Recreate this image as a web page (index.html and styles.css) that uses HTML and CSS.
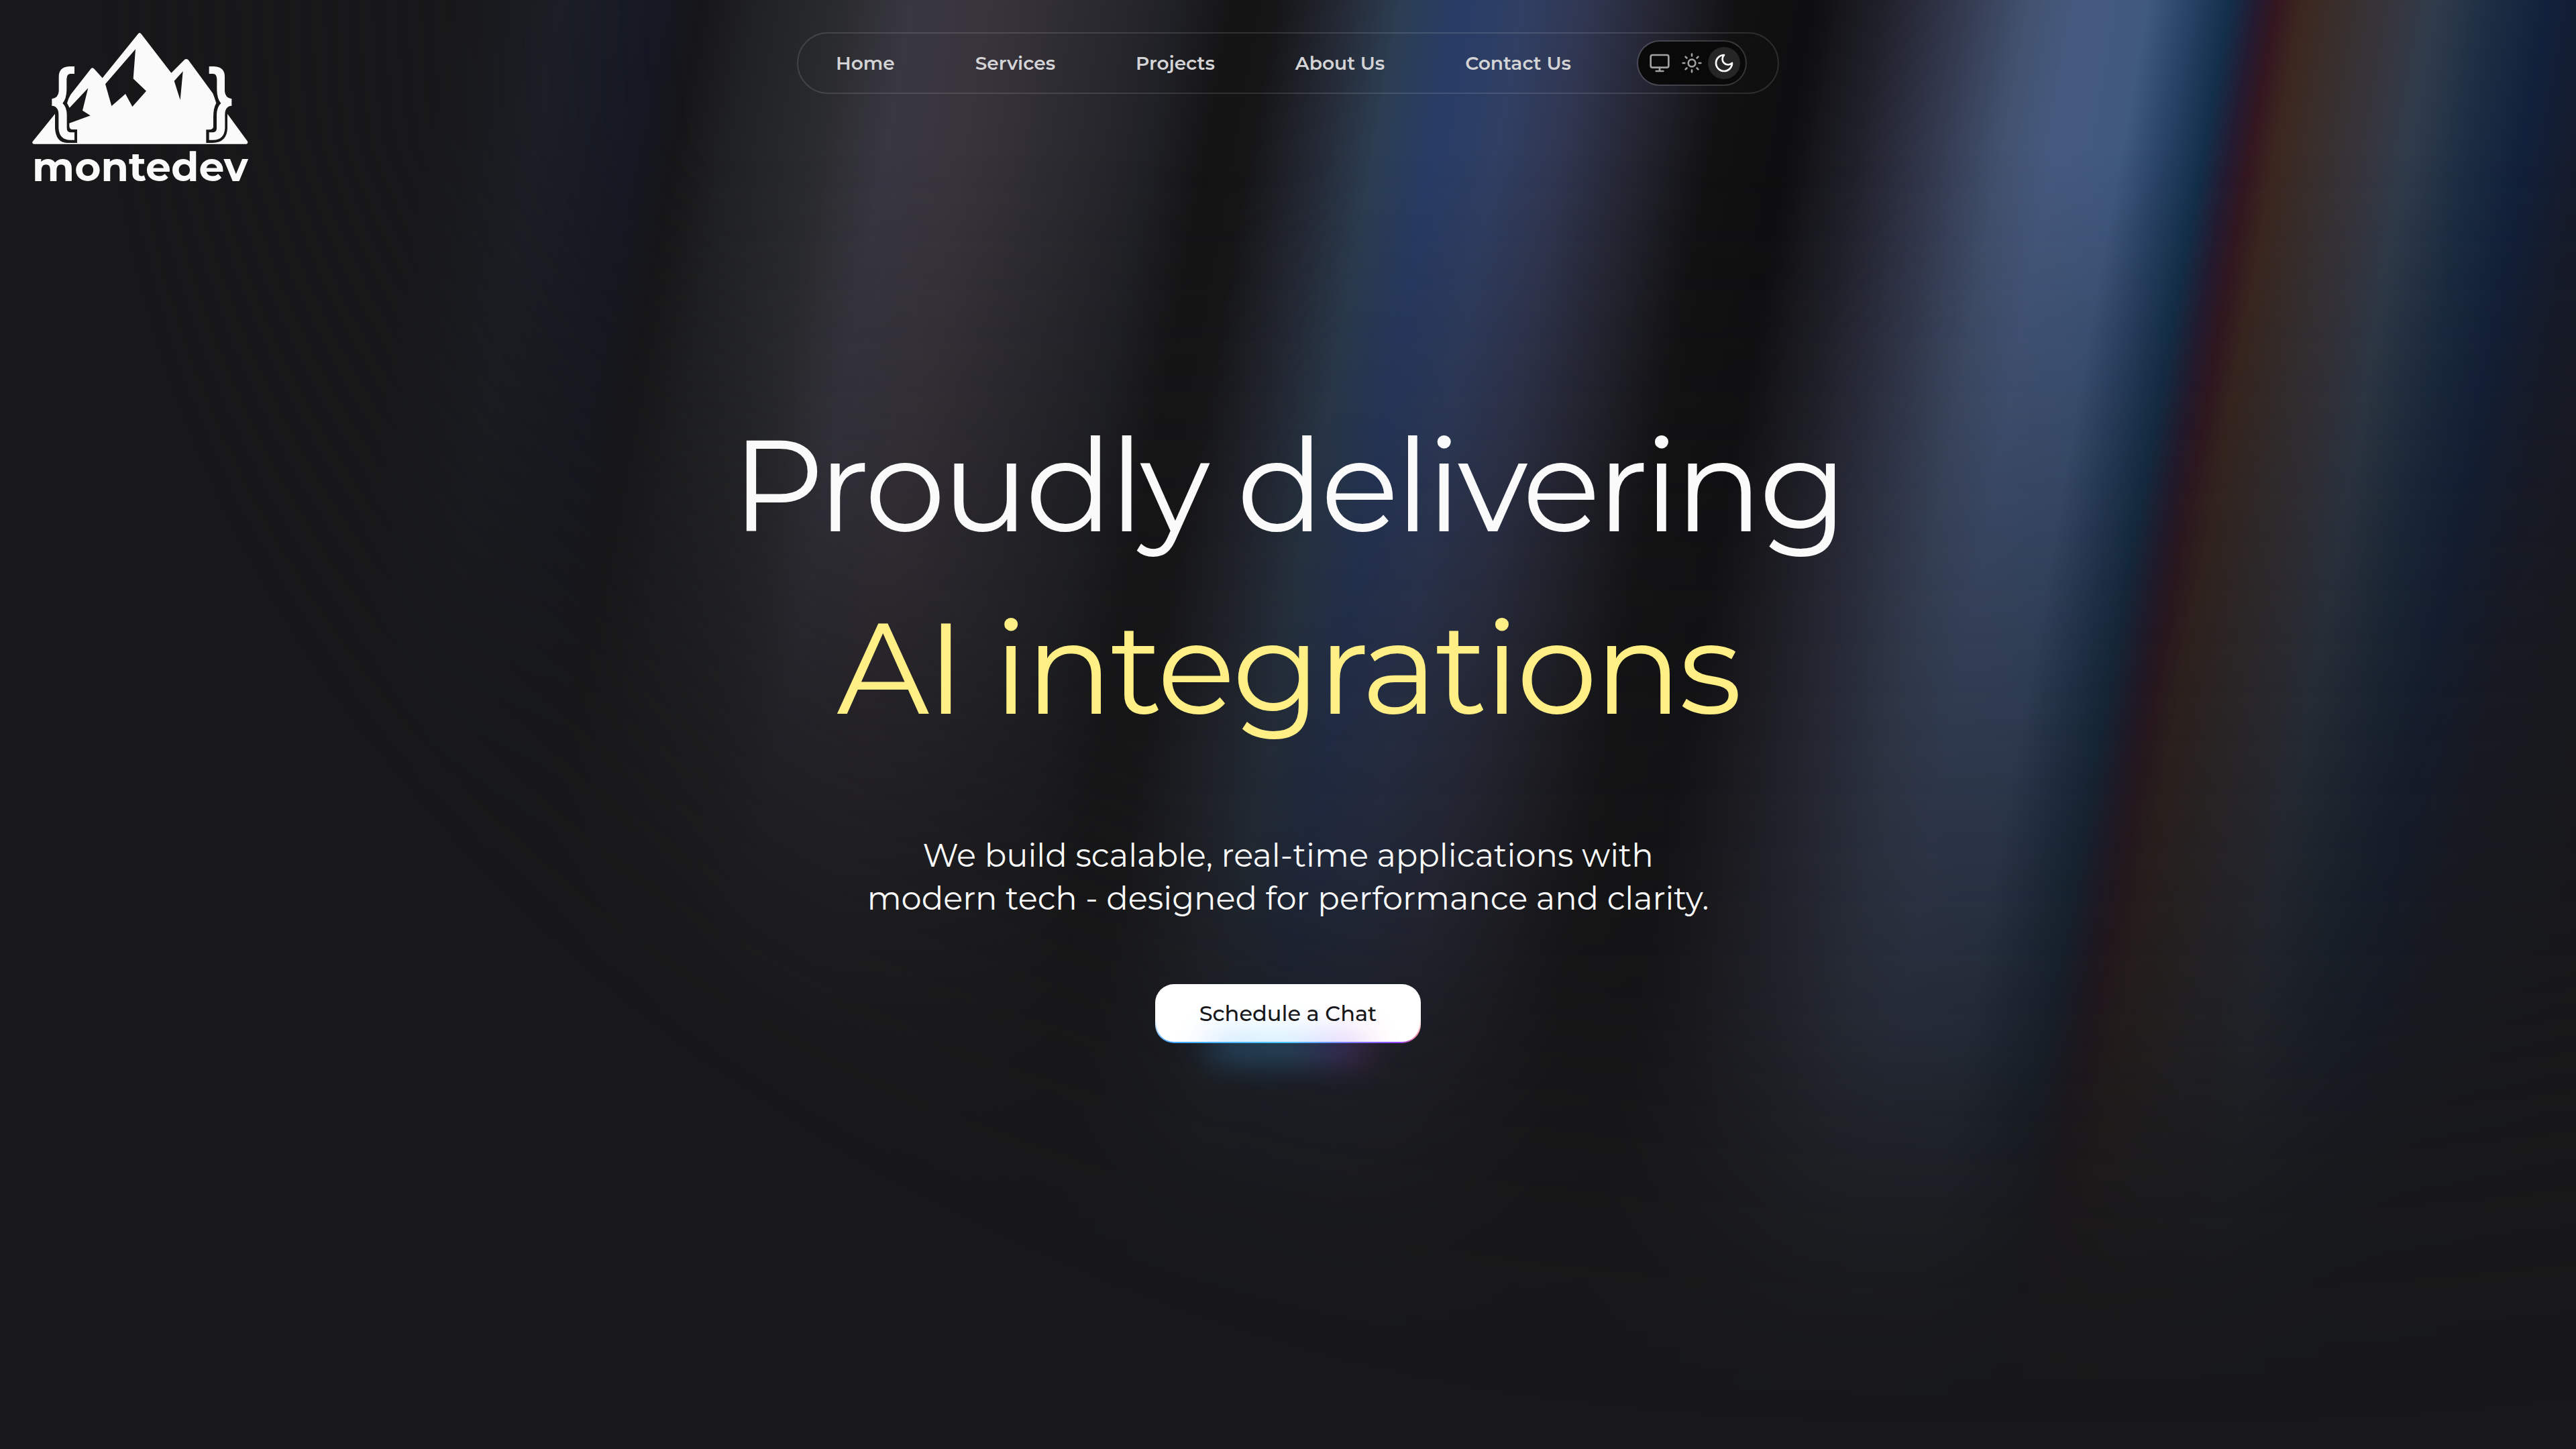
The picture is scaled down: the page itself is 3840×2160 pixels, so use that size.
FILE: index.html
```
<!DOCTYPE html>
<html lang="en">
<head>
  <meta charset="utf-8">
  <meta name="viewport" content="width=device-width, initial-scale=1">
  <title>montedev</title>
  <link rel="stylesheet" href="styles.css">
</head>
<body>
  <div class="backdrop" aria-hidden="true"><div class="rays"></div></div>

  <header class="header">
    <a class="logo" href="#" aria-label="montedev home">
      <svg class="logo-mark" viewBox="54 51 966 501" fill="currentColor" aria-hidden="true">
        <path fill-rule="evenodd" d="M62 551Q51 549 56 540L156 416V480Q160 545 210 546H255V486H235Q220 486 220 470V458L314 424L279 401L304 301L221 389L210 368Q214 350 226 330L317 214Q323 207 330 214L368 256L527 59Q534 49 542 59L676 233L735 174Q743 168 752 175L862 325Q870 345 877 368Q864 390 864 430V475Q862 487 845 487H832V546H860Q925 545 927 480V416L1016 538Q1022 548 1012 551ZM516 127L381 283L409 381L471 327L502 384L564 314L506 259ZM728 226L689 269L716 354Z"/>
        <path id="brace" d="M243 204H220Q173 206 173 250V315Q171 345 142 349V380Q172 382 172 420V480Q175 533 225 533H243V499H225Q209 497 209 480V420Q208 385 190 369Q207 350 208 310V260Q209 238 225 237H243Z"/>
        <use href="#brace" transform="translate(1088 0) scale(-1 1)"/>
      </svg>
      <span class="logo-text">montedev</span>
    </a>

    <nav class="nav" aria-label="Main">
      <div class="nav-links">
        <a href="#">Home</a>
        <a href="#">Services</a>
        <a href="#">Projects</a>
        <a href="#">About Us</a>
        <a href="#">Contact Us</a>
      </div>
      <div class="theme" role="group" aria-label="Theme">
        <button class="theme-option" type="button" aria-label="System theme">
          <svg viewBox="0 0 24 24"><rect x="2" y="3" width="20" height="14" rx="2"/><path d="M8 21h8M12 17v4"/></svg>
        </button>
        <button class="theme-option" type="button" aria-label="Light theme">
          <svg viewBox="0 0 24 24"><circle cx="12" cy="12" r="4"/><path d="M12 2v2M12 20v2M4.93 4.93l1.41 1.41M17.66 17.66l1.41 1.41M2 12h2M20 12h2M6.34 17.66l-1.41 1.41M19.07 4.93l-1.41 1.41"/></svg>
        </button>
        <button class="theme-option active" type="button" aria-label="Dark theme" aria-pressed="true">
          <svg viewBox="0 0 24 24"><path d="M12 3a6 6 0 0 0 9 9 9 9 0 1 1-9-9Z"/></svg>
        </button>
      </div>
    </nav>
  </header>

  <main class="hero">
    <h1 class="title">Proudly delivering <span class="accent">AI integrations</span></h1>
    <p class="lead">We build scalable, real-time applications with<br>modern tech - designed for performance and clarity.</p>
    <button class="cta" type="button"><span>Schedule a Chat</span></button>
  </main>
</body>
</html>
```
FILE: styles.css
```
* {
  box-sizing: border-box;
}

body {
  margin: 0;
  min-height: 100vh;
  background: #18181a;
  color: #fafafa;
  font-family: Montserrat, "Open Sans", sans-serif;
  font-weight: 500;
}

/* Slanted light rays that fade towards the lower left */
.backdrop {
  position: absolute;
  inset: 0;
  z-index: -1;
  overflow: hidden;
  mask-image:
    linear-gradient(#000 10%, rgba(0, 0, 0, .47) 54%, rgba(0, 0, 0, .2) 78%, transparent 100%),
    radial-gradient(ellipse 76% 102% at 80% 0, #000 70%, transparent 100%);
  mask-composite: intersect;
}

.rays {
  width: 125%;
  height: 100%;
  transform: skewX(-10deg);
  transform-origin: 0 14%;
  background: linear-gradient(90deg,
    #18181a 12.8%, #1c2029 16.3%, #151824 19.4%, #161618 20.7%, #202123 22.4%,
    #2a2b2d 25%, #383742 27.2%, #39343c 29.6%, #2b2a30 32.8%, #202126 35.3%,
    #141415 37.2%, #151516 38.5%, #242935 40.6%, #2c3e52 42.4%, #283c66 44.2%,
    #303f63 46.2%, #303650 48.3%, #232430 50.6%, #111112 52.9%, #0e0e10 55.2%,
    #20202a 57.4%, #31364a 59.5%, #42526f 61.9%, #465a80 63.5%, #40597f 65.6%,
    #2a4468 66.8%, #12304c 68.1%, #241a30 69%, #331720 69.6%, #3c271f 70.4%,
    #38302f 71.9%, #36353d 73.2%, #303c4b 74.5%, #1a2c42 76.5%, #11203a 78.1%,
    #161b2a 80%, #18181a 84.2%);
}

.header {
  display: grid;
  grid-template-columns: 1fr auto 1fr;
  align-items: start;
  padding: 48px 48px 0;
}

.logo {
  display: flex;
  flex-direction: column;
  justify-self: start;
  color: inherit;
  text-decoration: none;
}

.logo-mark {
  display: block;
  width: 322px;
}

.logo-text {
  font-size: 60px;
  font-weight: 700;
  line-height: 68px;
}

.nav {
  display: flex;
  align-items: center;
  gap: 98px;
  padding: 10px 46px 10px 56px;
  border: 2px solid rgba(255, 255, 255, .12);
  border-radius: 46px;
}

.nav-links {
  display: flex;
  gap: 120px;
}

.nav-links a {
  color: #d4d4d6;
  font-size: 28px;
  font-weight: 600;
  line-height: 40px;
  text-decoration: none;
}

.theme {
  display: flex;
  padding: 8px;
  border: 2px solid rgba(255, 255, 255, .16);
  border-radius: 34px;
  background: #09090a;
  background-clip: padding-box;
}

.theme-option {
  display: grid;
  place-items: center;
  width: 48px;
  height: 48px;
  padding: 0;
  border: 0;
  border-radius: 50%;
  background: none;
  color: #a1a1a1;
}

.theme-option.active {
  background: #262626;
  color: #fff;
}

.theme-option svg {
  width: 32px;
  height: 32px;
  fill: none;
  stroke: currentColor;
  stroke-width: 2;
  stroke-linecap: round;
  stroke-linejoin: round;
}

.hero {
  display: flex;
  flex-direction: column;
  align-items: center;
  padding: 304px 48px 96px;
  text-align: center;
}

.title {
  margin: 0;
  font-size: 192px;
  font-weight: 400;
  line-height: 272px;
  letter-spacing: -5px;
}

.accent {
  display: block;
  color: #ffef85;
  letter-spacing: -4px;
}

.lead {
  margin: 112px 0 96px;
  font-size: 48px;
  font-weight: 400;
  line-height: 64px;
}

.cta {
  --glow: linear-gradient(90deg, #409fff, #47c8ff 50%, #9040ff 92%, #ff6464);
  position: relative;
  padding: 20px 64px;
  border: 2px solid transparent;
  border-radius: 28px;
  background:
    linear-gradient(#fff, #fff) padding-box,
    linear-gradient(#fff 60%, transparent) border-box,
    var(--glow) border-box;
  color: #18181b;
  font: 500 32px/44px Montserrat, "Open Sans", sans-serif;
}

.cta::before {
  content: "";
  position: absolute;
  bottom: -20%;
  left: 20%;
  width: 60%;
  height: 20%;
  background: linear-gradient(90deg, #409fff, #47c8ff 50%, #9040ff 90%, #ff6464);
  filter: blur(26px);
  opacity: .75;
}

.cta span {
  position: relative;
}
```
